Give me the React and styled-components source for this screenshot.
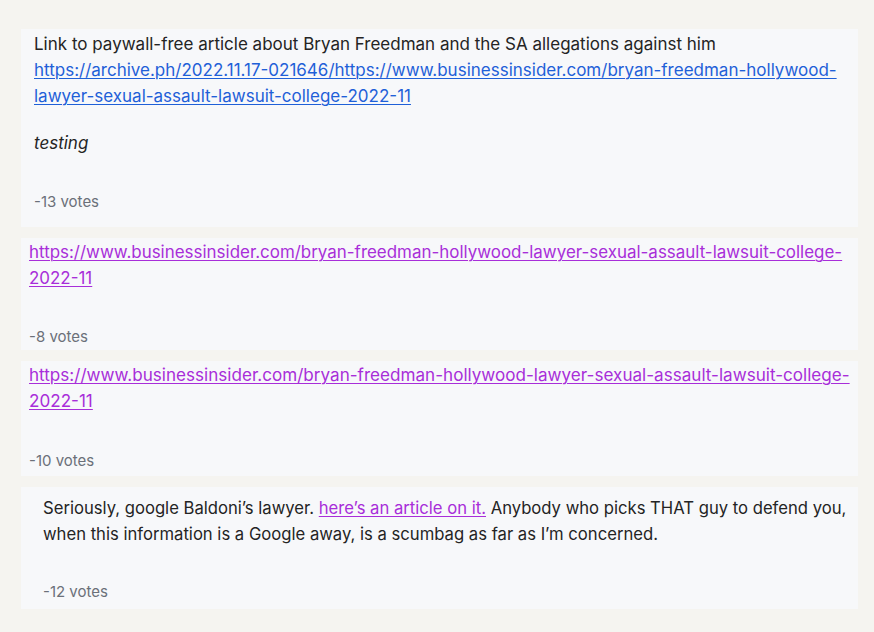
import React from "react";
import styled, { createGlobalStyle } from "styled-components";

const Global = createGlobalStyle`
  html, body { margin: 0; padding: 0; background: #f5f4f0; }
  body { font-family: Inter, "Noto Sans", sans-serif; color: #242424; }
`;

const Page = styled.div`
  width: 874px;
  height: 632px;
  box-sizing: border-box;
  padding: 29px 16px 0 21px;
  display: flex;
  flex-direction: column;
  gap: 11px;
`;

const Card = styled.article`
  background: #f7f8fa;
  box-sizing: border-box;
  width: 837px;
  height: ${(p) => p.$h}px;
  padding: ${(p) => p.$pt}px ${(p) => p.$pr}px 0 ${(p) => p.$pl}px;
  display: flex;
  flex-direction: column;
  font-size: ${(p) => p.$fs || 17}px;
`;

const Body = styled.div`
  display: flex;
  flex-direction: column;
  gap: 21px;
`;

const Para = styled.p`
  margin: 0;
  line-height: 26px;
  font-style: ${(p) => (p.$italic ? "italic" : "normal")};
  overflow-wrap: anywhere;
`;

const Link = styled.a`
  color: ${(p) => (p.$visited ? "#a82ed9" : "#1f60d8")};
  text-decoration: underline;
  text-underline-offset: 2px;
  text-decoration-thickness: 1px;
`;

const Votes = styled.div`
  margin-top: ${(p) => p.$mt}px;
  font-size: 15px;
  line-height: 20px;
  color: #6b7079;
`;

export default function App() {
  return (
    <>
      <Global />
      <Page>
        <Card $h={198} $pt={2} $pl={13} $pr={16}>
          <Body>
            <Para>
              Link to paywall-free article about Bryan Freedman and the SA allegations against him{" "}
              <Link href="#">
                https://archive.ph/2022.11.17-021646/https://www.businessinsider.com/bryan-freedman-hollywood-lawyer-sexual-assault-lawsuit-college-2022-11
              </Link>
            </Para>
            <Para $italic>testing</Para>
          </Body>
          <Votes $mt={36}>-13 votes</Votes>
        </Card>
        <Card $h={112} $pt={1} $pl={8} $pr={10} $fs={16.95}>
          <Para>
            <Link href="#" $visited>
              https://www.businessinsider.com/bryan-freedman-hollywood-lawyer-sexual-assault-lawsuit-college-2022-11
            </Link>
          </Para>
          <Votes $mt={36}>-8 votes</Votes>
        </Card>
        <Card $h={115} $pt={1} $pl={8} $pr={1} $fs={17.1}>
          <Para>
            <Link href="#" $visited>
              https://www.businessinsider.com/bryan-freedman-hollywood-lawyer-sexual-assault-lawsuit-college-2022-11
            </Link>
          </Para>
          <Votes $mt={37}>-10 votes</Votes>
        </Card>
        <Card $h={122} $pt={8} $pl={22} $pr={4} $fs={16.65}>
          <Para>
            Seriously, google Baldoni’s lawyer.{" "}
            <Link href="#" $visited>here’s an article on it.</Link> Anybody who picks THAT guy to
            defend you, when this information is a Google away, is a scumbag as far as I’m concerned.
          </Para>
          <Votes $mt={35}>-12 votes</Votes>
        </Card>
      </Page>
    </>
  );
}
